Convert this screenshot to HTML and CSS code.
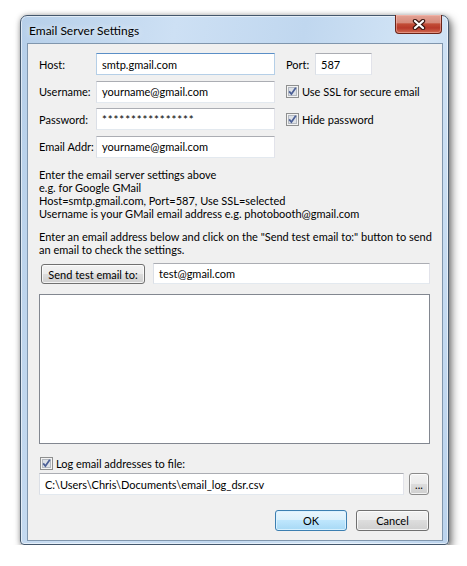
FILE: index.html
```html
<!DOCTYPE html>
<html>
<head>
<meta charset="utf-8">
<title>Email Server Settings</title>
<link rel="stylesheet" href="styles.css">
</head>
<body>
<div class="window">
  <div class="titlebar">
    <span class="title">Email Server Settings</span>
    <div class="close">
      <svg width="14" height="11" viewBox="0 0 14 11">
        <path d="M3 2 L11 9 M11 2 L3 9" stroke="#3a1712" stroke-width="4.4" stroke-linecap="round" fill="none"/>
        <path d="M3 2 L11 9 M11 2 L3 9" stroke="#ffffff" stroke-width="2.2" stroke-linecap="round" fill="none"/>
      </svg>
    </div>
  </div>

  <div class="client">
    <div class="form">
      <span class="lbl">Host:</span>
      <div class="tb focus">smtp.gmail.com</div>
      <span class="lbl port-lbl">Port:</span>
      <div class="tb">587</div>

      <span class="lbl">Username:</span>
      <div class="tb">yourname@gmail.com</div>
      <label class="chk side">
        <svg class="box" width="13" height="13" viewBox="0 0 13 13">
          <rect x="0.5" y="0.5" width="12" height="12" fill="#f3f3f3" stroke="#8e8f8f"/>
          <rect x="2.5" y="2.5" width="8" height="8" fill="#dde1e7" stroke="#b4b9c0"/>
          <path d="M3.2 6.4 L5.4 9 L9.8 2.8" stroke="#4b5f96" stroke-width="1.7" fill="none"/>
        </svg>
        <span>Use SSL for secure email</span>
      </label>

      <span class="lbl">Password:</span>
      <div class="tb pw">****************</div>
      <label class="chk side">
        <svg class="box" width="13" height="13" viewBox="0 0 13 13">
          <rect x="0.5" y="0.5" width="12" height="12" fill="#f3f3f3" stroke="#8e8f8f"/>
          <rect x="2.5" y="2.5" width="8" height="8" fill="#dde1e7" stroke="#b4b9c0"/>
          <path d="M3.2 6.4 L5.4 9 L9.8 2.8" stroke="#4b5f96" stroke-width="1.7" fill="none"/>
        </svg>
        <span>Hide password</span>
      </label>

      <span class="lbl">Email Addr:</span>
      <div class="tb">yourname@gmail.com</div>
    </div>

    <p class="note">Enter the email server settings above<br>e.g. for Google GMail<br>Host=smtp.gmail.com, Port=587, Use SSL=selected<br>Username is your GMail email address e.g. photobooth@gmail.com</p>
    <p class="note">Enter an email address below and click on the "Send test email to:" button to send<br>an email to check the settings.</p>

    <div class="send-row">
      <div class="btn send">Send test email to:</div>
      <div class="tb grow">test@gmail.com</div>
    </div>

    <div class="log"></div>

    <label class="chk log-chk">
      <svg class="box" width="13" height="13" viewBox="0 0 13 13">
        <rect x="0.5" y="0.5" width="12" height="12" fill="#f3f3f3" stroke="#8e8f8f"/>
        <rect x="2.5" y="2.5" width="8" height="8" fill="#dde1e7" stroke="#b4b9c0"/>
        <path d="M3.2 6.4 L5.4 9 L9.8 2.8" stroke="#4b5f96" stroke-width="1.7" fill="none"/>
      </svg>
      <span>Log email addresses to file:</span>
    </label>

    <div class="file-row">
      <div class="tb grow">C:\Users\Chris\Documents\email_log_dsr.csv</div>
      <div class="btn browse">...</div>
    </div>

    <div class="actions">
      <div class="btn default">OK</div>
      <div class="btn cancel">Cancel</div>
    </div>
  </div>
</div>
</body>
</html>
```

FILE: styles.css
```css
* { box-sizing: border-box; }

html, body {
  margin: 0;
  background: #ffffff;
}

body {
  font-family: Lato, "Noto Sans", sans-serif;
  font-size: 11px;
  color: #000;
}

/* window frame */
.window {
  margin: 15px 0 0 20px;
  width: 429px;
  height: 530px;
  border: 1px solid #44576c;
  border-radius: 7px 7px 4px 4px;
  padding: 0 5px 3px 6px;
  display: flex;
  flex-direction: column;
  background: linear-gradient(100deg, #b6cfe9 0%, #cde0f4 30%, #c0d7ef 55%, #d3e5f6 78%, #bbd3ed 100%);
  box-shadow: inset 0 0 0 1px rgba(255, 255, 255, 0.55),
              3px 4px 9px rgba(0, 0, 0, 0.5),
              0 0 5px rgba(0, 0, 0, 0.25);
}

.titlebar {
  flex: none;
  height: 27px;
  display: flex;
  justify-content: space-between;
  align-items: flex-start;
}

.title {
  margin: 8px 0 0 2px;
  font-size: 12px;
  line-height: 14px;
  color: #000;
  text-shadow: 0 0 6px rgba(255, 255, 255, 0.9);
}

.close {
  width: 47px;
  height: 19px;
  margin: -1px 1px 0 0;
  border: 1px solid #6a2418;
  border-top: none;
  border-radius: 0 0 4px 4px;
  display: flex;
  align-items: center;
  justify-content: center;
  background: linear-gradient(#e4a396 0%, #d68b7c 42%, #c24d37 50%, #b8392a 72%, #d06b52 100%);
  box-shadow: inset 0 0 0 1px rgba(255, 200, 190, 0.45);
}

/* client area */
.client {
  flex: 1;
  min-height: 0;
  border: 1px solid #8096ad;
  background: #f0f0f0;
  padding: 9px 12px 0 11px;
  display: flex;
  flex-direction: column;
}

.form {
  flex: none;
  display: grid;
  grid-template-columns: 57px 179px 11px 29px 57px;
  grid-auto-rows: 22px;
  row-gap: 5.6px;
  align-items: center;
}

.lbl { white-space: nowrap; }
.port-lbl { grid-column: 4; }
.side { grid-column: 4 / span 2; white-space: nowrap; }

.tb {
  height: 22px;
  background: #fff;
  border: 1px solid;
  border-color: #abadb3 #e2e3ea #e3e9ef #dbdfe6;
  padding: 0 5px;
  display: flex;
  align-items: center;
  white-space: nowrap;
  overflow: hidden;
}

.tb.focus {
  border-color: #5b8fc7 #b5cfe7 #b5cfe7 #b5cfe7;
}

.tb.pw {
  align-items: flex-start;
  padding-top: 4px;
  letter-spacing: 0.9px;
  font-size: 11.5px;
}

.chk {
  display: flex;
  align-items: center;
  height: 13px;
  white-space: nowrap;
}

.chk .box {
  flex: none;
  margin-right: 3px;
}

.note {
  flex: none;
  margin: 10px 0 0;
  line-height: 13px;
  white-space: nowrap;
}

.note + .note { margin-top: 10.5px; }

.send-row {
  flex: none;
  margin-top: 7px;
  display: flex;
  align-items: flex-start;
  height: 21px;
}

.btn {
  border: 1px solid #707070;
  border-radius: 3px;
  background: linear-gradient(#f2f2f2 0%, #ebebeb 50%, #dddddd 50%, #cfcfcf 100%);
  box-shadow: inset 0 0 0 1px rgba(255, 255, 255, 0.75);
  display: flex;
  align-items: center;
  justify-content: center;
  white-space: nowrap;
}

.send {
  flex: none;
  width: 104px;
  height: 20px;
  margin: 1px 0 0 2px;
}

.grow { flex: 1; }

.send-row .tb {
  margin-left: 8px;
  height: 21px;
}

.log {
  flex: none;
  margin-top: 10px;
  height: 150px;
  background: #fff;
  border: 1px solid #828790;
}

.log-chk {
  flex: none;
  margin: 13px 0 0 1px;
}

.file-row {
  flex: none;
  margin-top: 3px;
  display: flex;
}

.browse {
  flex: none;
  width: 20px;
  height: 22px;
  margin: 0 1px 0 5px;
  border-color: #8a8a8a;
  align-items: flex-end;
  padding-bottom: 4px;
  line-height: 10px;
}

.actions {
  flex: none;
  margin: 15px 1px 0 0;
  display: flex;
  justify-content: flex-end;
  gap: 9px;
}

.actions .btn { height: 21px; }
.default {
  width: 72px;
  border-color: #3c7fb1;
  background: linear-gradient(#eaf6fd 0%, #d9f0fc 50%, #bee6fd 50%, #a7d9f5 100%);
  box-shadow: inset 0 0 0 1px rgba(220, 242, 255, 0.9);
}
.cancel { width: 73px; }
```
